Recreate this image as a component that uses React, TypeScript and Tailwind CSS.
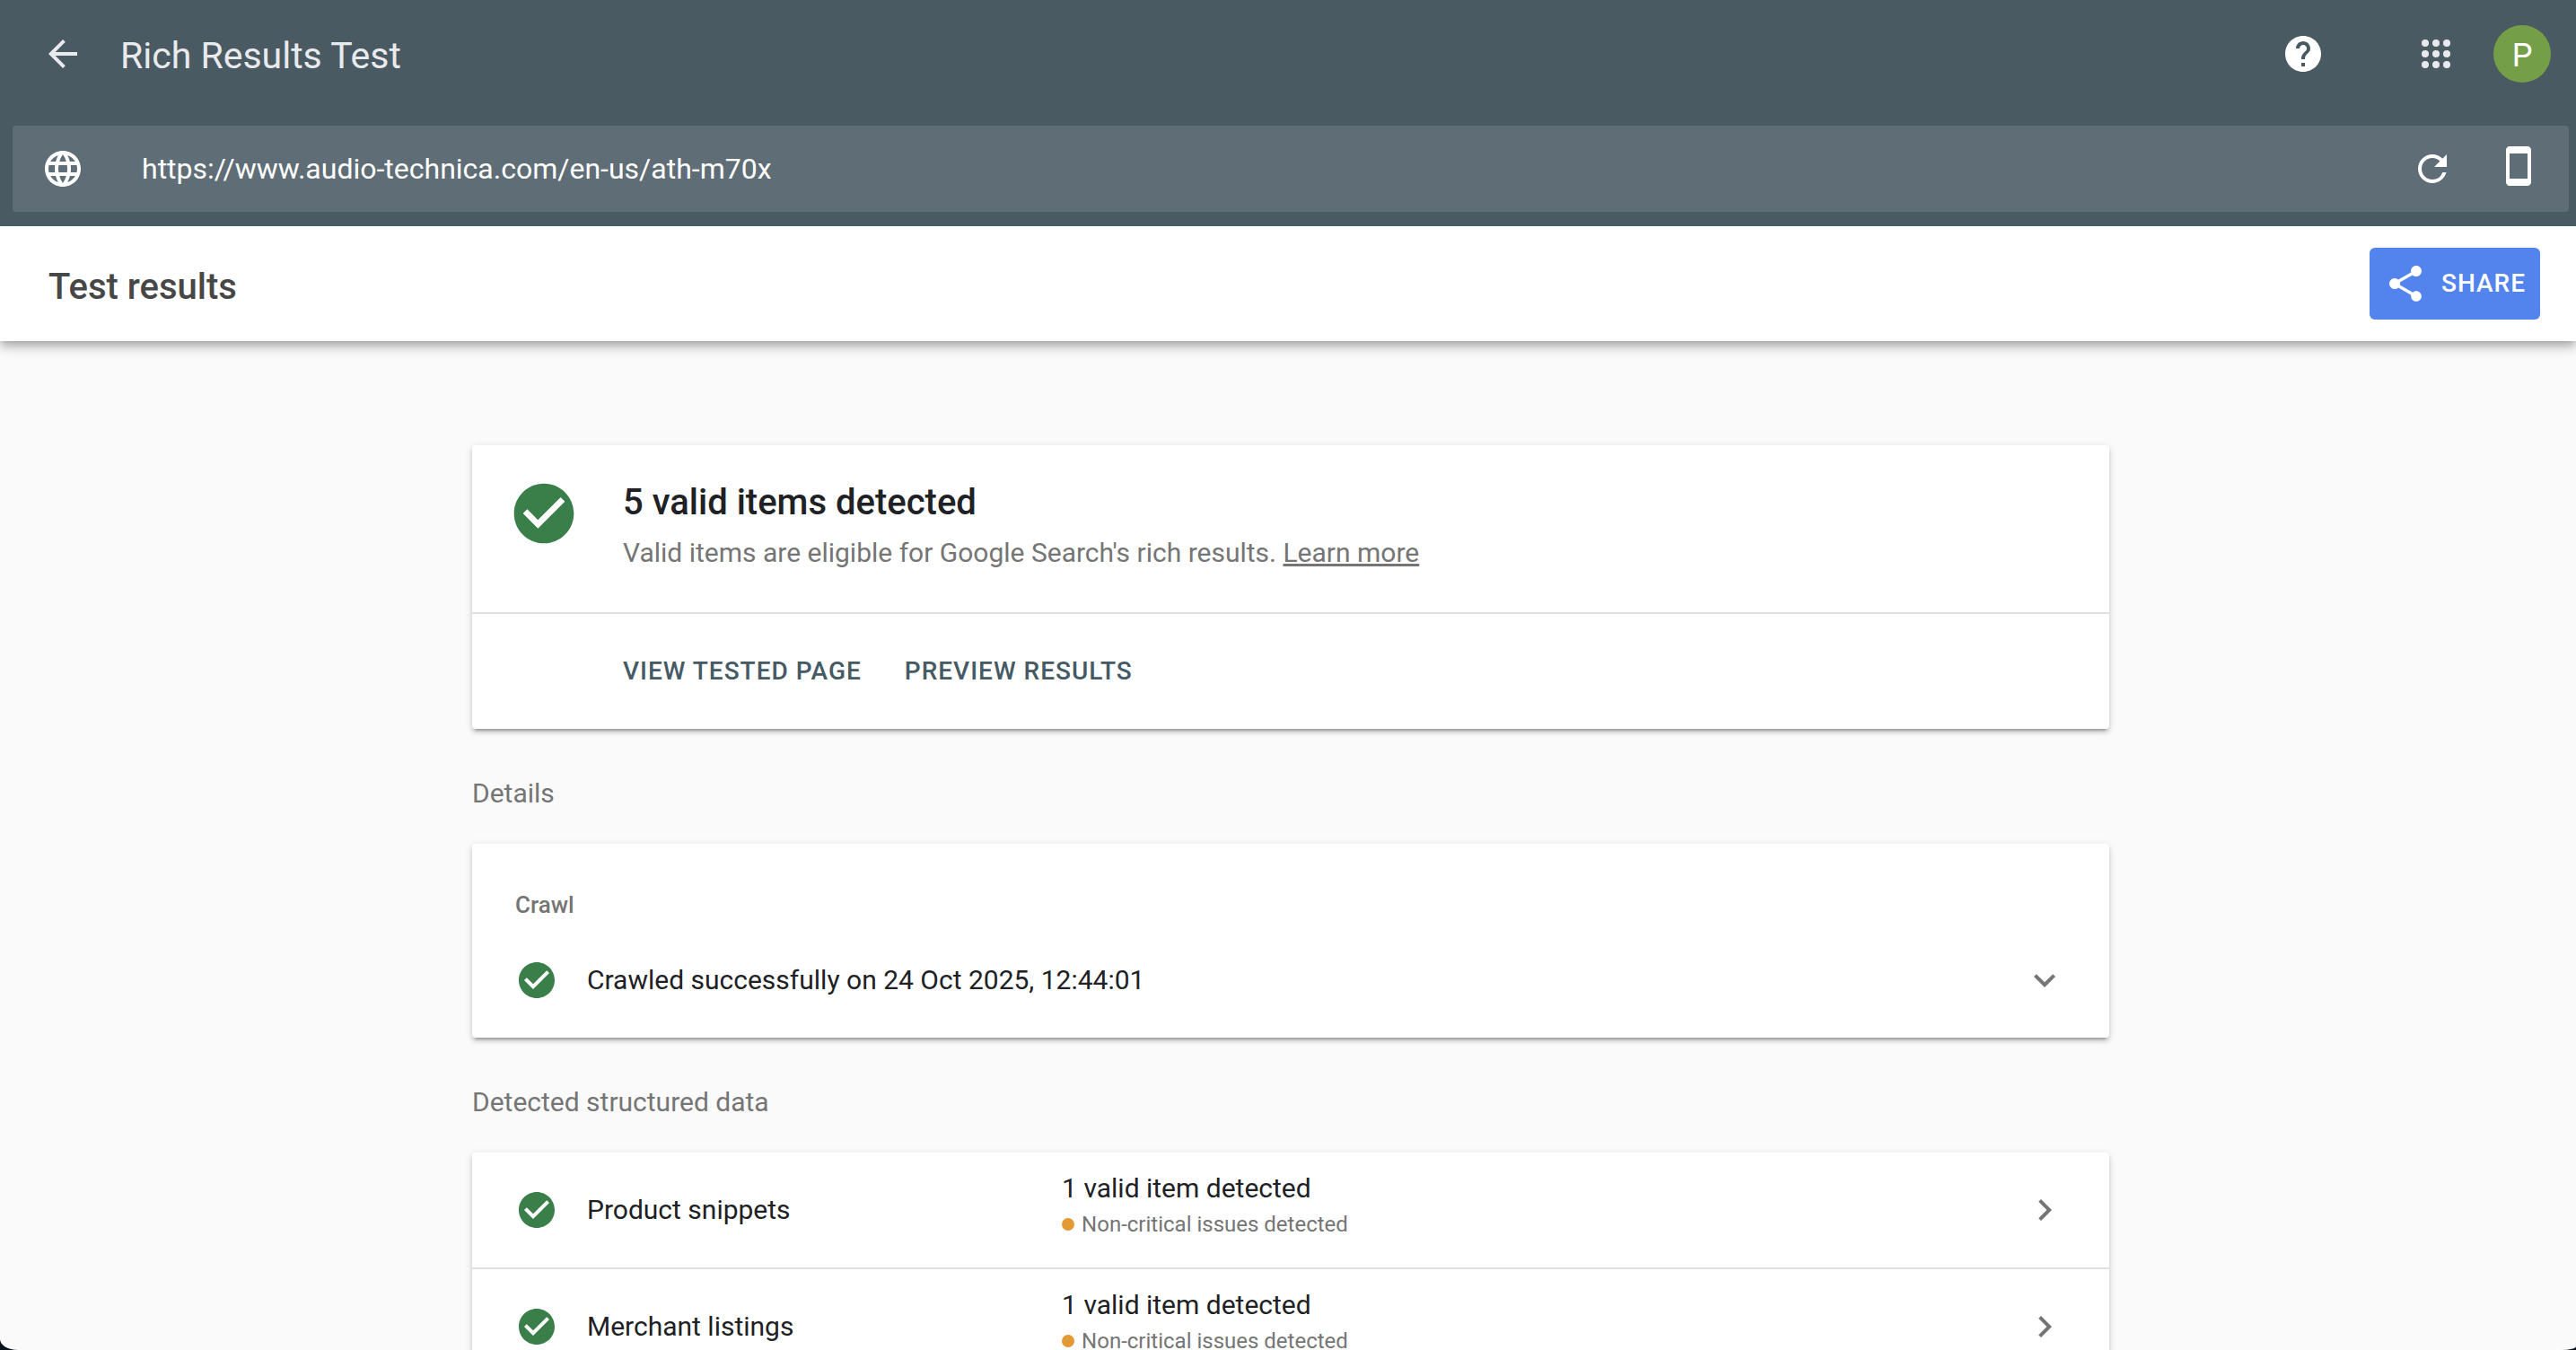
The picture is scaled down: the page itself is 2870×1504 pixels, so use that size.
import type { ReactNode } from "react";
import {
  MdArrowBack,
  MdCheckCircle,
  MdChevronRight,
  MdExpandMore,
  MdHelp,
  MdLanguage,
  MdRefresh,
  MdShare,
  MdStayCurrentPortrait,
} from "react-icons/md";

const structuredData = [
  { name: "Product snippets", status: "1 valid item detected", issue: "Non-critical issues detected" },
  { name: "Merchant listings", status: "1 valid item detected", issue: "Non-critical issues detected" },
];

function AppsIcon() {
  return (
    <svg viewBox="0 0 24 24" className="size-12 fill-[#e8eaed]" aria-hidden="true">
      {[6, 12, 18].map((y) => [6, 12, 18].map((x) => <circle key={`${x}-${y}`} cx={x} cy={y} r="2" />))}
    </svg>
  );
}

function Card({ children }: { children: ReactNode }) {
  return (
    <section className="rounded-[4px] bg-white shadow-[0_6px_2px_-4px_rgba(0,0,0,0.2),0_4px_4px_0_rgba(0,0,0,0.14),0_2px_10px_0_rgba(0,0,0,0.12)]">
      {children}
    </section>
  );
}

function SectionTitle({ children }: { children: ReactNode }) {
  return <h2 className="mt-[52px] mb-9 text-[30px] leading-10 text-[#757575]">{children}</h2>;
}

function TopBar() {
  return (
    <div className="flex h-[120px] items-center pr-7 pl-[46px]">
      <button type="button" aria-label="Back" className="text-[#e8eaed]">
        <MdArrowBack className="size-12" />
      </button>
      <h1 className="ml-10 pt-1 text-[41px] leading-12 text-[#e8eaed]">Rich Results Test</h1>
      <button type="button" aria-label="Help" className="ml-auto">
        <MdHelp className="size-12" />
      </button>
      <button type="button" aria-label="Google apps" className="ml-[100px]">
        <AppsIcon />
      </button>
      <button
        type="button"
        aria-label="Account"
        className="ml-10 size-16 rounded-full bg-[#759e48] pt-0.5 text-[36px] leading-16"
      >
        P
      </button>
    </div>
  );
}

function UrlBar() {
  return (
    <div className="mt-5 mr-2 ml-3.5 flex h-24 items-center rounded-[4px] bg-[#5f6d76] pr-8 pl-8">
      <MdLanguage className="size-12 shrink-0" />
      <input
        type="text"
        readOnly
        aria-label="Tested URL"
        defaultValue="https://www.audio-technica.com/en-us/ath-m70x"
        className="ml-16 h-12 min-w-0 flex-1 bg-transparent text-[32px] leading-12 outline-none"
      />
      <button type="button" aria-label="Run test again">
        <MdRefresh className="size-12" />
      </button>
      <button type="button" aria-label="Smartphone" className="mb-1.5 ml-12">
        <MdStayCurrentPortrait className="size-12" />
      </button>
    </div>
  );
}

export default function App() {
  return (
    <div className="h-screen bg-[#08131d] font-[Roboto,sans-serif]">
      <div className="flex h-full flex-col overflow-hidden rounded-br-[16px_4px] rounded-bl-[20px_12px] bg-[#fafafa]">
        <header className="relative z-10 shadow-[0_4px_8px_-2px_rgba(0,0,0,0.2),0_8px_10px_0_rgba(0,0,0,0.14),0_2px_20px_0_rgba(0,0,0,0.12)]">
          <div className="bg-[#4a5a62] pb-4 text-white">
            <TopBar />
            <UrlBar />
          </div>
          <div className="flex h-32 items-center bg-white pr-10 pl-[54px]">
            <h2 className="pt-2 text-[40px] leading-12 font-medium text-[#474747]">Test results</h2>
            <button
              type="button"
              className="ml-auto flex h-20 items-center gap-4 rounded-[6px] bg-[#5383ec] px-4 text-[28px] font-medium tracking-[1px] text-white"
            >
              <MdShare className="size-12" />
              SHARE
            </button>
          </div>
        </header>

        <main className="flex-1 overflow-y-auto pt-[116px] pl-1.5 [scrollbar-width:none]">
          <div className="mx-auto max-w-[1824px]">
            <Card>
              <div className="flex border-b-2 border-[#e0e0e0] pt-9 pr-12 pb-[46px] pl-10">
                <MdCheckCircle className="size-20 shrink-0 text-[#3a7e49]" />
                <div className="ml-12 pt-0.5">
                  <h2 className="text-[40px] leading-[52px] font-medium text-[#202124]">5 valid items detected</h2>
                  <p className="mt-2.5 text-[30px] leading-10 text-[#757575]">
                    Valid items are eligible for Google Search's rich results.{" "}
                    <a href="#learn-more" className="underline">
                      Learn more
                    </a>
                  </p>
                </div>
              </div>
              <div className="flex h-32 items-center gap-12 pl-[168px] text-[28px] font-medium tracking-[1px] text-[#455a64]">
                <button type="button">VIEW TESTED PAGE</button>
                <button type="button">PREVIEW RESULTS</button>
              </div>
            </Card>

            <SectionTitle>Details</SectionTitle>
            <Card>
              <h3 className="pt-[52px] pl-12 text-[26px] leading-8 font-medium text-[#757575]">Crawl</h3>
              <button type="button" className="mt-1 flex h-32 w-full items-center px-12 text-left">
                <MdCheckCircle className="size-12 text-[#3a7e49]" />
                <span className="ml-8 text-[30px] leading-10 text-[#202124]">
                  Crawled successfully on 24 Oct 2025, 12:44:01
                </span>
                <MdExpandMore className="ml-auto size-12 text-[#757575]" />
              </button>
            </Card>

            <SectionTitle>Detected structured data</SectionTitle>
            <Card>
              <ul className="divide-y-2 divide-[#e0e0e0]">
                {structuredData.map((item) => (
                  <li key={item.name}>
                    <button type="button" className="flex h-32 w-full items-center pr-12 text-left">
                      <span className="flex w-[37%] items-center pl-12">
                        <MdCheckCircle className="size-12 text-[#3a7e49]" />
                        <span className="ml-8 text-[30px] leading-10 text-[#202124]">{item.name}</span>
                      </span>
                      <span className="pb-2">
                        <span className="block text-[30px] leading-10 text-[#202124]">{item.status}</span>
                        <span className="flex items-center gap-2 text-[24px] leading-10 text-[#757575]">
                          <span className="size-3.5 rounded-full bg-[#e39a34]" />
                          {item.issue}
                        </span>
                      </span>
                      <MdChevronRight className="ml-auto size-12 text-[#757575]" />
                    </button>
                  </li>
                ))}
              </ul>
            </Card>
          </div>
        </main>
      </div>
    </div>
  );
}
